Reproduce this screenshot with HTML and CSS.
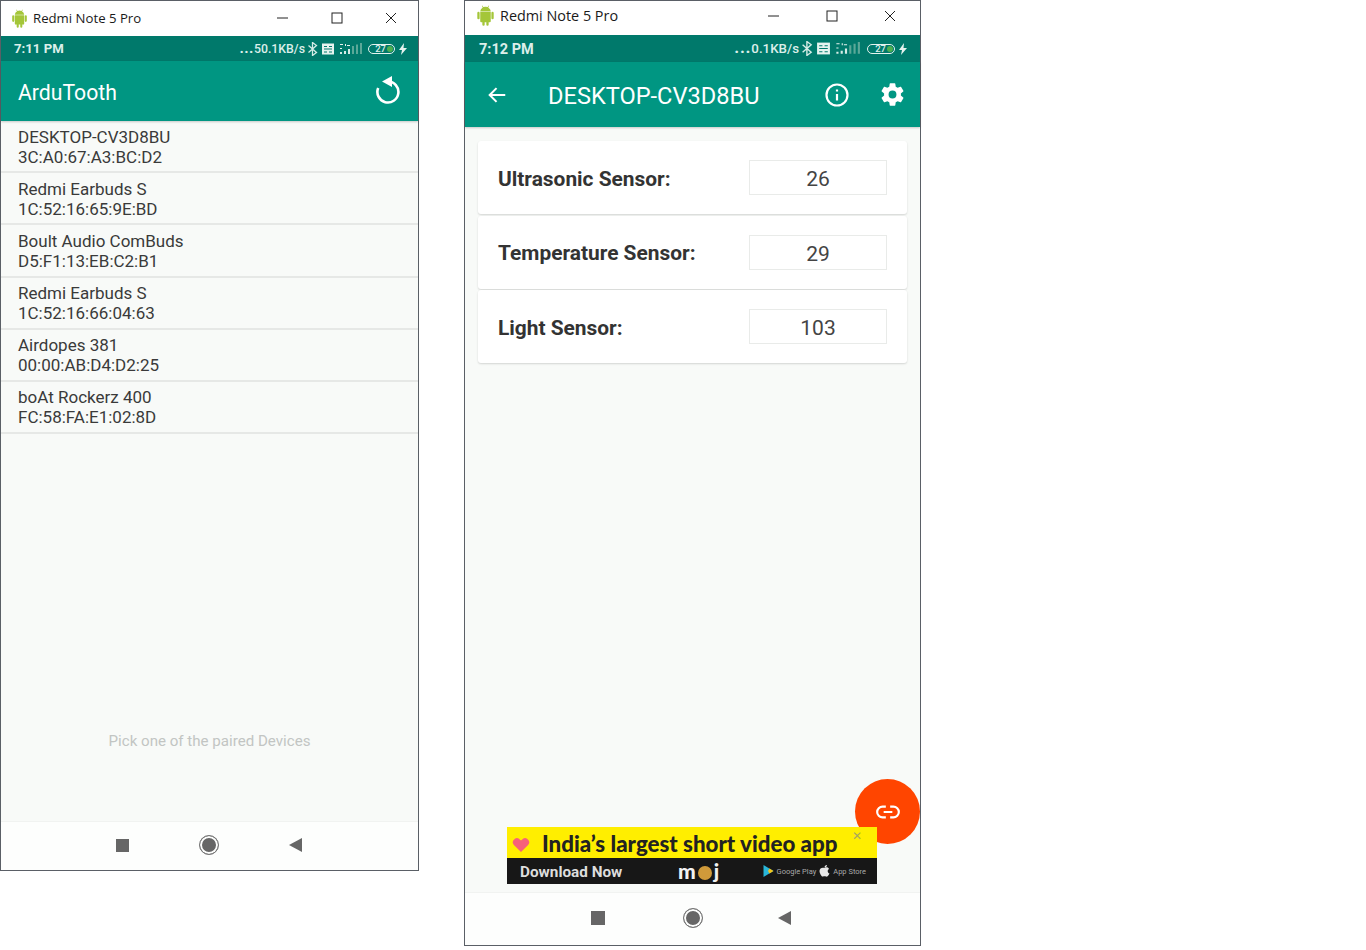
FILE: index.html
```html
<!DOCTYPE html>
<html lang="en">
<head>
    <meta charset="UTF-8">
    <meta name="viewport" content="width=device-width, initial-scale=1.0">
    <title>ArduTooth</title>
    <link rel="stylesheet" href="styles.css">
</head>
<body>

<svg class="defs" width="0" height="0">
    <symbol id="android" viewBox="0 0 16 20">
        <path fill="#a4c639" d="M3 6.5h10v9a1 1 0 0 1-1 1h-1v2.200a1.100 1.100 0 0 1-2.200 0v-2.200H7.200v2.200a1.100 1.100 0 0 1-2.200 0v-2.200H4a1 1 0 0 1-1-1zM.2 7.500a1.100 1.100 0 0 1 2.200 0v5a1.100 1.100 0 0 1-2.200 0zM13.600 7.500a1.100 1.100 0 0 1 2.200 0v5a1.100 1.100 0 0 1-2.200 0zM3 6a5 4.500 0 0 1 2.400-3.700L4.500.8l.4-.3 1 1.500a5.500 5.500 0 0 1 4.200 0l1-1.500.4.300-.9 1.500A5 4.500 0 0 1 13 6z"/>
    </symbol>
    <symbol id="status-icons" viewBox="0 0 54 14">
        <path fill="none" stroke="#d5ece6" stroke-width="1.300" d="M.5 3.500l8 7-4 3V.5l4 3-8 7"/>
        <rect x="14" y="1.500" width="12" height="11" fill="#e6f3ef"/>
        <path stroke="#00796b" stroke-width="1" d="M16 4.500h3M21 4.500h3M16 7h8M16 10h3M21 10h3"/>
        <path fill="#d5ece6" d="M32 10h2v2h-2zM36 9h2v3h-2zM40 7h2v5h-2z"/>
        <path fill="#5ba898" d="M44 4h2v8h-2zM48 2.500h2v9.500h-2zM52 1h2v11h-2z"/>
        <path fill="#e6f3ef" d="M32 2h3v1h-3zM37 2h1v2h-1zM39 3h3v1h-3zM32 6h2v1h-2z"/>
    </symbol>
    <symbol id="bolt" viewBox="0 0 8 12">
        <path fill="#e6f3ef" d="M5 0L0 7h3l-1 5 6-7H4.500z"/>
    </symbol>
</svg>

<div class="desktop">
    <section class="window window-left">
        <header class="titlebar">
            <svg class="android-logo"><use href="#android"/></svg>
            <span class="title-text">Redmi Note 5 Pro</span>
            <div class="window-controls">
                <svg viewBox="0 0 12 12"><path d="M0 6h11"/></svg>
                <svg viewBox="0 0 12 12"><rect x="1" y="1" width="10" height="10"/></svg>
                <svg viewBox="0 0 12 12"><path d="M1 1l10 10M11 1L1 11"/></svg>
            </div>
        </header>

        <div class="statusbar">
            <span class="clock">7:11 PM</span>
            <div class="status-right">
                <span class="speed"><b>...</b>50.1KB/s</span>
                <svg class="status-icons"><use href="#status-icons"/></svg>
                <span class="battery">27<i></i></span>
                <svg class="bolt"><use href="#bolt"/></svg>
            </div>
        </div>

        <div class="appbar">
            <h1 class="appbar-title">ArduTooth</h1>
            <svg class="refresh" viewBox="0 0 26 30"><path d="M3.200 13A10.500 10.500 0 1 0 13 6.500"/><path class="fill" d="M17 1v11L7 6.500z"/></svg>
        </div>

        <main class="screen">
            <ul class="device-list">
                <li>DESKTOP-CV3D8BU<br>3C:A0:67:A3:BC:D2</li>
                <li>Redmi Earbuds S<br>1C:52:16:65:9E:BD</li>
                <li>Boult Audio ComBuds<br>D5:F1:13:EB:C2:B1</li>
                <li>Redmi Earbuds S<br>1C:52:16:66:04:63</li>
                <li>Airdopes 381<br>00:00:AB:D4:D2:25</li>
                <li>boAt Rockerz 400<br>FC:58:FA:E1:02:8D</li>
            </ul>
            <p class="hint">Pick one of the paired Devices</p>
        </main>

        <nav class="navbar">
            <span class="nav-square"></span>
            <span class="nav-circle"></span>
            <span class="nav-back"></span>
        </nav>
    </section>

    <section class="window window-right">
        <header class="titlebar">
            <svg class="android-logo"><use href="#android"/></svg>
            <span class="title-text">Redmi Note 5 Pro</span>
            <div class="window-controls">
                <svg viewBox="0 0 12 12"><path d="M0 6h11"/></svg>
                <svg viewBox="0 0 12 12"><rect x="1" y="1" width="10" height="10"/></svg>
                <svg viewBox="0 0 12 12"><path d="M1 1l10 10M11 1L1 11"/></svg>
            </div>
        </header>

        <div class="statusbar">
            <span class="clock">7:12 PM</span>
            <div class="status-right">
                <span class="speed"><b>...</b>0.1KB/s</span>
                <svg class="status-icons"><use href="#status-icons"/></svg>
                <span class="battery">27<i></i></span>
                <svg class="bolt"><use href="#bolt"/></svg>
            </div>
        </div>

        <div class="appbar">
            <svg class="back-arrow" viewBox="0 0 24 24"><path d="M21 12H4M11.500 4.500L4 12l7.500 7.500"/></svg>
            <h1 class="appbar-title">DESKTOP-CV3D8BU</h1>
            <svg class="info" viewBox="0 0 24 24"><circle cx="12" cy="12" r="10.500"/><path d="M12 11v6.500M12 6.500v2"/></svg>
            <svg class="gear" viewBox="0 0 24 24"><path d="M19.430 12.980c.04-.32.070-.64.070-.98s-.03-.66-.07-.98l2.110-1.650c.19-.15.240-.42.120-.64l-2-3.460c-.12-.22-.39-.3-.61-.22l-2.490 1c-.52-.4-1.080-.73-1.690-.98l-.38-2.650A.488.488 0 0 0 14 2h-4c-.25 0-.46.18-.49.420l-.38 2.650c-.61.25-1.170.59-1.690.98l-2.490-1c-.23-.09-.49 0-.61.220l-2 3.460c-.13.220-.07.490.12.640l2.110 1.650c-.04.320-.07.650-.07.980s.03.660.07.980l-2.110 1.650c-.19.150-.24.420-.12.640l2 3.460c.12.220.39.300.61.220l2.490-1c.52.400 1.080.730 1.690.980l.38 2.650c.03.240.24.420.49.420h4c.25 0 .46-.18.49-.42l.38-2.650c.61-.25 1.170-.59 1.690-.98l2.490 1c.23.090.49 0 .61-.22l2-3.460c.12-.22.07-.49-.12-.64zM12 15.500a3.500 3.500 0 1 1 0-7 3.500 3.500 0 0 1 0 7z"/></svg>
        </div>

        <main class="screen screen-sensors">
            <div class="sensor-card">
                <span class="sensor-name">Ultrasonic Sensor:</span>
                <span class="sensor-value">26</span>
            </div>
            <div class="sensor-card">
                <span class="sensor-name">Temperature Sensor:</span>
                <span class="sensor-value">29</span>
            </div>
            <div class="sensor-card">
                <span class="sensor-name">Light Sensor:</span>
                <span class="sensor-value">103</span>
            </div>

            <button class="fab">
                <svg viewBox="0 0 24 24"><path d="M10 7H7a5 5 0 0 0 0 10h3M14 7h3a5 5 0 0 1 0 10h-3M8 12h8"/></svg>
            </button>

            <div class="ad-banner">
                <div class="ad-top">
                    <svg class="ad-heart" viewBox="0 0 20 18"><path d="M10 17L2 9a4.500 4.500 0 0 1 7-6l1 1 1-1a4.500 4.500 0 0 1 7 6z"/></svg>
                    <span class="ad-headline">India’s largest short video app</span>
                    <span class="ad-close">✕</span>
                </div>
                <div class="ad-bottom">
                    <span class="ad-download">Download Now</span>
                    <span class="ad-logo">m<i></i>j</span>
                    <span class="ad-stores">
                        <svg viewBox="0 0 10 12"><path fill="#29b6d8" d="M0 0l10 6-10 6z"/><path fill="#f5c518" d="M6 3.600L10 6 6 8.400 4.500 6z"/></svg>
                        <small>Google Play</small>
                        <svg viewBox="0 0 10 12"><path fill="#e8e8e8" d="M5 3c1-1 4-1 4.500 1-2 1-1.500 4 .500 4.500C9 11 7.500 12 6.500 11.500c-1-.4-2-.4-3 0C2 12 0 8 0 6c0-3 3-4 5-3zM5 2.500C5 1 6 0 7.500 0 7.500 1.500 6.500 2.500 5 2.500z"/></svg>
                        <small>App Store</small>
                    </span>
                </div>
            </div>
        </main>

        <nav class="navbar">
            <span class="nav-square"></span>
            <span class="nav-circle"></span>
            <span class="nav-back"></span>
        </nav>
    </section>
</div>

</body>
</html>
```

FILE: styles.css
```css
body {
    margin: 0;
    background-color: #fff;
    font-family: Roboto, Arial, sans-serif;
    color: #333;
}

.defs {
    position: absolute;
}

.desktop {
    display: flex;
    align-items: flex-start;
    gap: 45px;
}

.window {
    display: flex;
    flex-direction: column;
    box-sizing: border-box;
    border: 1px solid #5a5f66;
    background-color: #f8faf8;
}

.window-left {
    width: 419px;
    height: 871px;
}

.window-right {
    width: 457px;
    height: 946px;
}

/* Title bar */
.titlebar {
    display: flex;
    align-items: center;
    flex: none;
    box-sizing: border-box;
    height: 35px;
    padding: 0 0 1px 11px;
    background-color: #fff;
}

.window-right .titlebar {
    height: 34px;
    padding: 0 0 5px 12px;
}

.android-logo {
    width: 15px;
    height: 19px;
    margin-right: 6px;
}

.title-text {
    font-family: "Open Sans", Arial, sans-serif;
    font-size: 13.2px;
    color: #1a1a1a;
}

.window-right .android-logo {
    width: 17px;
    height: 21px;
    margin-right: 6px;
}

.window-right .title-text {
    font-size: 14.4px;
}

.window-controls {
    display: flex;
    align-items: center;
    gap: 42px;
    margin-left: auto;
    margin-right: 21px;
}

.window-right .window-controls {
    gap: 46px;
    margin-right: 24px;
}

.window-controls svg {
    width: 12px;
    height: 12px;
    fill: none;
    stroke: #222;
    stroke-width: 1;
}

/* Android status bar */
.statusbar {
    display: flex;
    align-items: center;
    justify-content: space-between;
    flex: none;
    height: 25px;
    padding: 0 11px 0 13px;
    background-color: #00796b;
    color: #dcefea;
    font-size: 13.2px;
    font-weight: 700;
}

.window-right .statusbar {
    height: 27px;
    padding: 0 13px 0 14px;
    font-size: 14.5px;
}

.window-right .clock {
    padding-top: 2px;
}

.status-right {
    display: flex;
    align-items: center;
    gap: 3px;
}

.speed {
    font-size: 12.3px;
    font-weight: 500;
    white-space: nowrap;
}

.window-right .speed {
    font-size: 13.3px;
}

.speed b {
    font-size: 15px;
    line-height: 10px;
    letter-spacing: 0.5px;
}

.window-right .speed b {
    font-size: 17px;
    letter-spacing: 0.8px;
}

.status-icons {
    width: 54px;
    height: 14px;
}

.window-right .status-icons {
    width: 58px;
    height: 15px;
}

.battery {
    display: flex;
    align-items: center;
    justify-content: flex-end;
    gap: 1px;
    box-sizing: border-box;
    width: 27px;
    height: 10px;
    margin-left: 3px;
    padding-right: 1px;
    border: 1px solid #e6f3ef;
    border-radius: 5px;
    font-size: 9.5px;
    font-weight: 500;
    line-height: 8px;
}

.window-right .battery {
    width: 28px;
    margin-left: 4px;
}

.battery i {
    width: 6px;
    height: 6px;
    border-radius: 50%;
    background-color: #4caf50;
}

.bolt {
    width: 8px;
    height: 12px;
    margin-left: 1px;
}

/* App bar */
.appbar {
    display: flex;
    align-items: center;
    flex: none;
    height: 60px;
    padding: 0 17px;
    background-color: #009682;
    color: #fff;
    box-shadow: 0 1px 2px rgba(0, 0, 0, 0.2);
    z-index: 1;
}

.window-right .appbar {
    height: 65px;
    padding: 0 14px 0 21px;
}

.appbar-title {
    flex: 1;
    margin: 0;
    padding-top: 2px;
    font-size: 21.2px;
    font-weight: 400;
}

.window-right .appbar-title {
    margin-left: 40px;
    font-size: 23.6px;
}

.appbar svg {
    fill: none;
    stroke: #fff;
    stroke-width: 2.2;
}

.appbar .refresh {
    width: 26px;
    height: 30px;
    margin-bottom: 2px;
    stroke-width: 2.6;
}

.appbar .refresh .fill {
    fill: #fff;
    stroke: none;
}

.back-arrow {
    width: 22px;
    height: 22px;
}

.info {
    width: 24px;
    height: 24px;
    margin-right: 30px;
}

.appbar .gear {
    width: 27px;
    height: 27px;
    fill: #fff;
    stroke: none;
}

/* Screens */
.screen {
    position: relative;
    display: flex;
    flex-direction: column;
    flex: 1;
}

.device-list {
    margin: 0;
    padding: 0;
    list-style: none;
}

.device-list li {
    box-sizing: border-box;
    height: 52.2px;
    padding: 5.5px 17px 0;
    border-bottom: 2px solid #e6e8e6;
    font-size: 17px;
    line-height: 20px;
    color: #3a3a3a;
}

.hint {
    margin: 298px 0 0;
    text-align: center;
    font-size: 15.1px;
    color: #c2c5c3;
}

.screen-sensors {
    padding: 14px 13px 0;
}

.sensor-card {
    display: flex;
    align-items: center;
    justify-content: space-between;
    box-sizing: border-box;
    height: 73px;
    margin-bottom: 1.5px;
    padding: 0 20px;
    border-radius: 3px;
    background-color: #fff;
    box-shadow: 0 1px 2px rgba(0, 0, 0, 0.15);
}

.sensor-name {
    padding-top: 2px;
    font-size: 20.9px;
    font-weight: 700;
    color: #333;
}

.sensor-value {
    box-sizing: border-box;
    width: 138px;
    height: 35px;
    border: 1px solid #e9ebe9;
    text-align: center;
    font-size: 21px;
    line-height: 36px;
    color: #444;
}

.fab {
    position: absolute;
    right: 0;
    top: 652px;
    width: 65px;
    height: 65px;
    padding: 0;
    border: none;
    border-radius: 50%;
    background-color: #ff4500;
}

.fab svg {
    width: 26px;
    height: 26px;
    margin-top: 4px;
    fill: none;
    stroke: #fff;
    stroke-width: 2;
}

/* Ad */
.ad-banner {
    position: absolute;
    left: 42px;
    top: 700px;
    width: 370px;
    height: 57px;
}

.ad-top {
    position: relative;
    display: flex;
    align-items: center;
    height: 31px;
    background-color: #ffee00;
}

.ad-heart {
    width: 18px;
    height: 16px;
    margin: 4px 12px 0 5px;
    fill: #f7607a;
}

.ad-headline {
    padding-top: 3px;
    font-family: Lato, Arial, sans-serif;
    font-size: 22.3px;
    line-height: 24px;
    font-weight: 900;
    color: #222;
    white-space: nowrap;
}

.ad-close {
    position: absolute;
    right: 15px;
    top: 2px;
    font-size: 12px;
    color: #a8a860;
}

.ad-bottom {
    display: flex;
    align-items: center;
    height: 26px;
    padding: 0 11px 0 13px;
    background-color: #171717;
    color: #ddd;
}

.ad-download {
    width: 158px;
    padding-top: 2px;
    font-size: 15.3px;
    font-weight: 700;
}

.ad-logo {
    display: flex;
    align-items: center;
    font-family: Lato, Arial, sans-serif;
    font-size: 21px;
    line-height: 18px;
    font-weight: 900;
    color: #f2f2f2;
}

.ad-logo i {
    width: 14px;
    height: 14px;
    margin: 3px 2px 0;
    border-radius: 50%;
    background-color: #d09a3a;
}

.ad-stores {
    display: flex;
    align-items: center;
    gap: 3px;
    margin-left: auto;
}

.ad-stores svg {
    width: 11px;
    height: 12px;
}

.ad-stores small {
    font-size: 7.5px;
    color: #aaa;
}

/* Bottom nav */
.navbar {
    display: flex;
    align-items: center;
    justify-content: center;
    flex: none;
    box-sizing: border-box;
    gap: 70px;
    height: 49px;
    padding: 0 1px 2px 0;
    background-color: #fdfefd;
    border-top: 1px solid #f1f3f1;
}

.window-right .navbar {
    height: 53px;
    gap: 78px;
    padding-right: 4px;
}

.nav-square {
    width: 13px;
    height: 13px;
    background-color: #666;
}

.window-right .nav-square {
    width: 14px;
    height: 14px;
}

.nav-circle {
    box-sizing: border-box;
    width: 20px;
    height: 20px;
    border: 1px solid #777;
    border-radius: 50%;
    background-color: #666;
    box-shadow: inset 0 0 0 2px #fdfefd;
}

.nav-back {
    width: 0;
    height: 0;
    border-top: 7px solid transparent;
    border-bottom: 7px solid transparent;
    border-right: 13px solid #666;
}

.window-right .nav-back {
    margin-left: -3px;
}
```
